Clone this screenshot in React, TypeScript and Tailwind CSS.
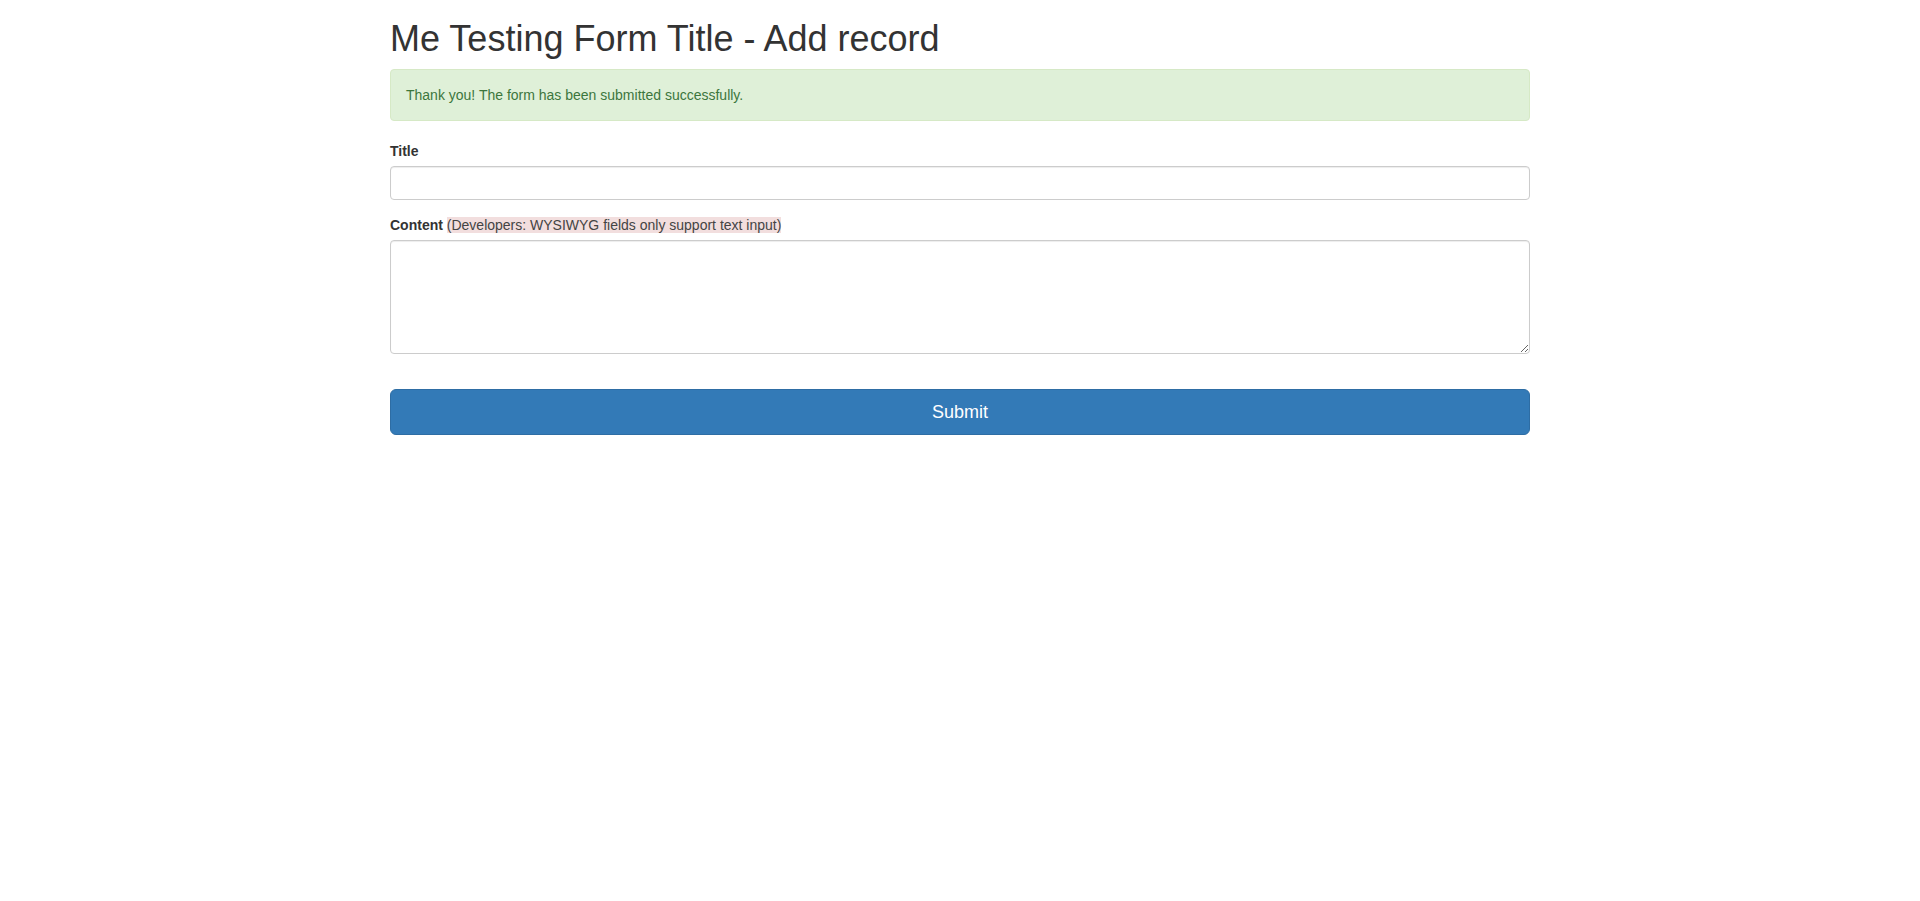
export default function App() {
  return (
    <div className="min-h-screen bg-white font-['Liberation_Sans',Arial,sans-serif] text-[14px] leading-[20px] text-[#333]">
      <div className="mx-auto w-[1170px] px-[15px]">
        <h1 className="mt-[19px] mb-[10px] text-[36px] leading-[1.1] font-normal text-[#333]">
          Me Testing Form Title - Add record
        </h1>

        <div className="mb-[20px] rounded-[4px] border border-[#d6e9c6] bg-[#dff0d8] p-[15px] text-[#3c763d]">
          Thank you! The form has been submitted successfully.
        </div>

        <form onSubmit={(e) => e.preventDefault()}>
          <div className="mb-[15px]">
            <label className="mb-[5px] inline-block font-bold">Title</label>
            <input
              type="text"
              className="block h-[34px] w-full rounded-[4px] border border-[#ccc] bg-white px-[12px] py-[6px] text-[14px] text-[#555] shadow-[inset_0_1px_1px_rgba(0,0,0,0.075)] outline-none"
            />
          </div>

          <div className="mb-[15px]">
            <label className="mb-[5px] inline-block">
              <span className="font-bold">Content</span>{" "}
              <span className="bg-[#f2dede] font-normal text-[#444]">
                (Developers: WYSIWYG fields only support text input)
              </span>
            </label>
            <textarea
              rows={5}
              className="block h-[114px] w-full rounded-[4px] border border-[#ccc] bg-white px-[12px] py-[6px] text-[14px] leading-[20px] text-[#555] shadow-[inset_0_1px_1px_rgba(0,0,0,0.075)] outline-none"
            />
          </div>

          <button
            type="submit"
            className="mt-[35px] block h-[46px] w-full rounded-[6px] border border-[#2e6da4] bg-[#337ab7] px-[16px] py-[10px] text-[18px] leading-[24px] text-white"
          >
            Submit
          </button>
        </form>
      </div>
    </div>
  );
}
